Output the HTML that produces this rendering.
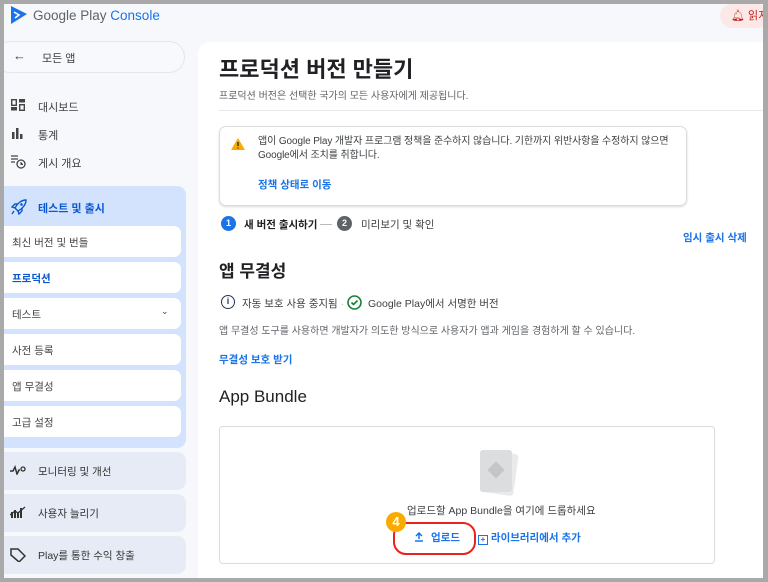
<!DOCTYPE html>
<html><head><meta charset="utf-8"><style>
*{margin:0;padding:0;box-sizing:border-box}
body{width:768px;height:582px;overflow:hidden;background:#a9a9a9;font-family:"Liberation Sans","Noto Sans CJK KR",sans-serif;position:relative}
#frame{position:absolute;left:4px;top:4px;width:759px;height:574px;background:#f6f8fc;overflow:hidden}
.a{position:absolute;white-space:nowrap}
.nav{position:absolute;left:0;font-size:11px;color:#3c4043}
.sub{position:absolute;left:0;width:177px;height:31px;background:#fff;border-radius:0 7px 7px 0;font-size:10.5px;color:#444;padding:9px 0 0 8px}
.grp{position:absolute;left:0;width:182px;height:38px;background:#e6ebf5;border-radius:0 9px 9px 0;font-size:10.5px;color:#333}
.blue{color:#1a73e8}
</style></head><body>
<div id="frame">
<svg class="a" style="left:6px;top:1px" width="18" height="20" viewBox="0 0 18 20"><path d="M1 1 L17 9 L1 19 Z" fill="#1a73e8"/><path d="M4 7 L9 10 L5 13" stroke="#fff" stroke-width="1.6" fill="none"/></svg>
<div class="a" style="left:29px;top:4px;font-size:13.5px;color:#5f6368">Google Play <span style="color:#1a73e8">Console</span></div>
<div class="a" style="left:716px;top:0;width:50px;height:24px;background:#fce8e6;border-radius:12px"></div>
<div class="a" style="left:727px;top:3px;font-size:11px;color:#c5221f">🔔︎ 읽지</div>
<div class="a" style="left:-10px;top:37px;width:191px;height:32px;border:1px solid #e3e6ec;border-radius:16px;background:#f8f9fc"></div>
<div class="a" style="left:9px;top:44px;font-size:13px;color:#444">←</div>
<div class="a" style="left:38px;top:46px;font-size:11px;color:#3c4043">모든 앱</div>
<svg class="a" style="left:7px;top:95px" width="14" height="12"><rect x="0.7" y="0.7" width="4.6" height="5.6" fill="none" stroke="#444" stroke-width="1.4"/><rect x="0" y="8" width="6" height="3.5" fill="#444"/><rect x="8" y="0" width="6" height="3.5" fill="#444"/><rect x="8.7" y="5.7" width="4.6" height="5.6" fill="none" stroke="#444" stroke-width="1.4"/></svg>
<div class="nav" style="left:34px;top:95px">대시보드</div>
<svg class="a" style="left:8px;top:124px" width="12" height="11"><rect x="0" y="4" width="2.5" height="7" fill="#444"/><rect x="4" y="0" width="2.5" height="11" fill="#444"/><rect x="8" y="6" width="2.5" height="5" fill="#444"/></svg>
<div class="nav" style="left:34px;top:123px">통계</div>
<svg class="a" style="left:7px;top:151px" width="16" height="14"><path d="M0 1h7M0 4h7M0 7h4" stroke="#444" stroke-width="1.2"/><circle cx="10" cy="9" r="4" fill="none" stroke="#444" stroke-width="1.3"/><path d="M10 7v2.5h2" stroke="#444" stroke-width="1"/></svg>
<div class="nav" style="left:34px;top:151px">게시 개요</div>
<div class="a" style="left:0;top:182px;width:182px;height:262px;background:#d3e3fd;border-radius:0 9px 9px 0"></div>
<svg class="a" style="left:7px;top:195px" width="16" height="16" viewBox="0 0 16 16"><path d="M15 1 C10 1 6 5 4 9 L7 12 C11 10 15 6 15 1 Z" fill="none" stroke="#0b57d0" stroke-width="1.4"/><path d="M4 9 L1 8 L4 5 L7 5 M7 12 L8 15 L11 12 L11 9 M3 12 L1 15" fill="none" stroke="#0b57d0" stroke-width="1.4"/><circle cx="10.5" cy="5.5" r="1.3" fill="#0b57d0"/></svg>
<div class="a" style="left:34px;top:196px;font-size:11px;color:#0b57d0;font-weight:bold">테스트 및 출시</div>
<div class="sub" style="top:222px">최신 버전 및 번들</div>
<div class="sub" style="top:258px;color:#0b57d0;font-weight:bold">프로덕션</div>
<div class="sub" style="top:294px">테스트<span style="position:absolute;left:157px;top:8px;font-size:9px">⌄</span></div>
<div class="sub" style="top:330px">사전 등록</div>
<div class="sub" style="top:366px">앱 무결성</div>
<div class="sub" style="top:402px">고급 설정</div>
<div class="grp" style="top:448px"><svg class="a" style="left:6px;top:13px" width="16" height="10"><path d="M0 6h3l2-4 2 7 2-4h1" fill="none" stroke="#333" stroke-width="1.5"/><circle cx="13" cy="4" r="2" fill="none" stroke="#333" stroke-width="1.3"/></svg><span class="a" style="left:34px;top:12px">모니터링 및 개선</span></div>
<div class="grp" style="top:490px"><svg class="a" style="left:6px;top:11px" width="16" height="14"><path d="M2 13V7M5 13V5M8 13V8M11 13V3" stroke="#333" stroke-width="2"/><path d="M0 10l5-4 3 2 7-6" fill="none" stroke="#333" stroke-width="1.3"/></svg><span class="a" style="left:34px;top:12px">사용자 늘리기</span></div>
<div class="grp" style="top:532px"><svg class="a" style="left:6px;top:12px" width="16" height="14"><path d="M1 1h7l7 7-6 6-8-7z" fill="none" stroke="#333" stroke-width="1.5"/></svg><span class="a" style="left:34px;top:12px">Play를 통한 수익 창출</span></div>
<div class="a" style="left:194px;top:38px;width:580px;height:560px;background:#fff;border-radius:12px"></div>
<div class="a" style="left:215px;top:48px;font-size:22px;font-weight:bold;color:#202124">프로덕션 버전 만들기</div>
<div class="a" style="left:215px;top:83px;font-size:10px;color:#5f6368">프로덕션 버전은 선택한 국가의 모든 사용자에게 제공됩니다.</div>
<div class="a" style="left:215px;top:106px;width:560px;height:1px;background:#e8eaed"></div>
<div class="a" style="left:215px;top:122px;width:468px;height:80px;border:1px solid #dadce0;border-radius:7px;box-shadow:0 1px 2px rgba(0,0,0,.15)"></div>
<svg class="a" style="left:227px;top:134px" width="14" height="12"><path d="M7 0 L14 12 L0 12 Z" fill="#f9ab00"/><path d="M7 4v4M7 9.5v1" stroke="#202124" stroke-width="1.3"/></svg>
<div class="a" style="left:254px;top:131px;font-size:10px;color:#3c4043;line-height:14px;letter-spacing:-0.1px">앱이 Google Play 개발자 프로그램 정책을 준수하지 않습니다. 기한까지 위반사항을 수정하지 않으면<br>Google에서 조치를 취합니다.</div>
<div class="a blue" style="left:254px;top:173px;font-size:10.5px;font-weight:bold">정책 상태로 이동</div>
<div class="a" style="left:217px;top:212px;width:15px;height:15px;border-radius:50%;background:#1a73e8;color:#fff;font-size:9px;font-weight:bold;text-align:center;line-height:15px">1</div>
<div class="a" style="left:240px;top:213px;font-size:10.5px;font-weight:bold;color:#202124">새 버전 출시하기</div>
<div class="a" style="left:316px;top:220px;width:12px;height:1px;background:#bbb"></div>
<div class="a" style="left:333px;top:212px;width:15px;height:15px;border-radius:50%;background:#5f6368;color:#fff;font-size:9px;font-weight:bold;text-align:center;line-height:15px">2</div>
<div class="a" style="left:357px;top:213px;font-size:10.5px;color:#3c4043">미리보기 및 확인</div>
<div class="a blue" style="left:679px;top:226px;font-size:10.5px;font-weight:bold">임시 출시 삭제</div>
<div class="a" style="left:215px;top:253px;font-size:17px;font-weight:bold;color:#202124">앱 무결성</div>
<div class="a" style="left:217px;top:291px;width:14px;height:14px;border:1.6px solid #1f3a5f;border-radius:50%;font-size:9px;font-weight:bold;text-align:center;line-height:11px;color:#1f3a5f">i</div>
<div class="a" style="left:238px;top:292px;font-size:10.5px;color:#3c4043">자동 보호 사용 중지됨 <span style="color:#bbb">·</span></div>
<svg class="a" style="left:343px;top:291px" width="15" height="15"><circle cx="7.5" cy="7.5" r="6.5" fill="none" stroke="#188038" stroke-width="1.6"/><path d="M4.5 7.5l2 2 4-4" stroke="#188038" stroke-width="1.6" fill="none"/></svg>
<div class="a" style="left:364px;top:292px;font-size:10.5px;color:#3c4043">Google Play에서 서명한 버전</div>
<div class="a" style="left:215px;top:318px;font-size:10px;color:#5f6368">앱 무결성 도구를 사용하면 개발자가 의도한 방식으로 사용자가 앱과 게임을 경험하게 할 수 있습니다.</div>
<div class="a blue" style="left:215px;top:348px;font-size:10.5px;font-weight:bold">무결성 보호 받기</div>
<div class="a" style="left:215px;top:383px;font-size:17px;color:#202124;font-weight:500">App Bundle</div>
<div class="a" style="left:215px;top:422px;width:496px;height:138px;border:1px solid #dadce0;border-radius:4px"></div>
<div class="a" style="left:478px;top:448px;width:34px;height:42px;background:#e9eaec;border-radius:3px;transform:rotate(8deg)"></div>
<div class="a" style="left:476px;top:446px;width:32px;height:42px;background:#dcdddf;border-radius:3px"></div>
<div class="a" style="left:486px;top:460px;width:12px;height:12px;background:#c4c5c7;transform:rotate(45deg)"></div>
<div class="a" style="left:403px;top:499px;font-size:10.5px;color:#3c4043">업로드할 App Bundle을 여기에 드롭하세요</div>
<div class="a" style="left:389px;top:518px;width:83px;height:33px;border:2.5px solid #e8231b;border-radius:13px"></div>
<div class="a" style="left:382px;top:508px;width:20px;height:20px;border-radius:50%;background:#f9ab00;color:#fff;font-size:13px;font-weight:bold;text-align:center;line-height:20px">4</div>
<svg class="a" style="left:410px;top:528px" width="10" height="10"><path d="M5 1v6M2 4l3-3 3 3M1 9h8" fill="none" stroke="#1a73e8" stroke-width="1.5"/></svg>
<div class="a blue" style="left:427px;top:526px;font-size:10.5px;font-weight:bold">업로드</div>
<div class="a blue" style="left:474px;top:526px;font-size:10.5px;font-weight:bold"><span style="display:inline-block;width:10px;height:10px;border:1.3px solid #1a73e8;font-size:8px;line-height:7px;text-align:center;vertical-align:-1px">+</span> 라이브러리에서 추가</div>
</div>
</body></html>
